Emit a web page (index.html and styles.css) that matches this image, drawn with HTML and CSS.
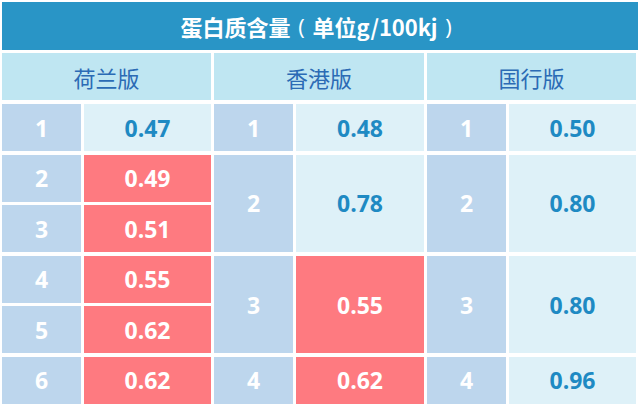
FILE: index.html
```html
<!DOCTYPE html>
<html lang="zh">
<head>
<meta charset="utf-8">
<link rel="stylesheet" href="styles.css">
</head>
<body>
<div class="page">
  <div class="title">蛋白质含量<span class="paren">(</span>单位g/100kj<span class="paren">)</span></div>
  <div class="heads">
    <div class="head">荷兰版</div>
    <div class="head">香港版</div>
    <div class="head">国行版</div>
  </div>
  <div class="body">
    <div class="group">
      <div class="num">1</div><div class="val">0.47</div>
      <div class="num">2</div><div class="val red">0.49</div>
      <div class="num">3</div><div class="val red">0.51</div>
      <div class="num">4</div><div class="val red">0.55</div>
      <div class="num">5</div><div class="val red">0.62</div>
      <div class="num">6</div><div class="val red">0.62</div>
    </div>
    <div class="group wide">
      <div class="num">1</div><div class="val">0.48</div>
      <div class="num span2">2</div><div class="val span2">0.78</div>
      <div class="num span2">3</div><div class="val red span2">0.55</div>
      <div class="num">4</div><div class="val red">0.62</div>
    </div>
    <div class="group">
      <div class="num">1</div><div class="val">0.50</div>
      <div class="num span2">2</div><div class="val span2">0.80</div>
      <div class="num span2">3</div><div class="val span2">0.80</div>
      <div class="num">4</div><div class="val">0.96</div>
    </div>
  </div>
</div>
</body>
</html>
```

FILE: styles.css
```css
html, body {
  margin: 0;
  padding: 0;
  background: #ffffff;
}
.page {
  padding: 2px 0 0 2px;
  width: 636px;
  font-family: "Noto Sans CJK SC", "Microsoft YaHei", sans-serif;
}
.title {
  height: 48px;
  width: 636px;
  background: #2995c6;
  color: #ffffff;
  font-weight: 700;
  font-size: 22px;
  display: flex;
  align-items: center;
  justify-content: center;
  white-space: pre;
}
.paren {
  display: inline-block;
  width: 22px;
  text-align: center;
  font-family: "Open Sans", sans-serif;
  font-weight: 400;
}
.heads {
  margin-top: 3px;
  width: 634px;
  display: grid;
  grid-template-columns: 209px 210px 209px;
  column-gap: 3px;
}
.head {
  height: 47px;
  background: #bfe6f2;
  color: #2b6bb5;
  font-size: 22px;
  display: flex;
  align-items: center;
  justify-content: center;
}
.body {
  margin-top: 4px;
  width: 634px;
  display: grid;
  grid-template-columns: 209px 210px 209px;
  column-gap: 3px;
}
.group {
  display: grid;
  grid-template-columns: 79px 127px;
  grid-template-rows: repeat(6, 47px);
  column-gap: 3px;
  row-gap: 3.6px;
}
.group.wide {
  grid-template-columns: 79px 128px;
}
.num, .val {
  display: flex;
  align-items: center;
  justify-content: center;
  font-family: "Open Sans", "Noto Sans", sans-serif;
  font-weight: 700;
  font-size: 23px;
}
.num {
  background: #bdd6ed;
  color: #ffffff;
}
.val {
  background: #def1f8;
  color: #1e8ac3;
}
.val.red {
  background: #fe7a80;
  color: #ffffff;
}
.span2 {
  grid-row: span 2;
}
```
